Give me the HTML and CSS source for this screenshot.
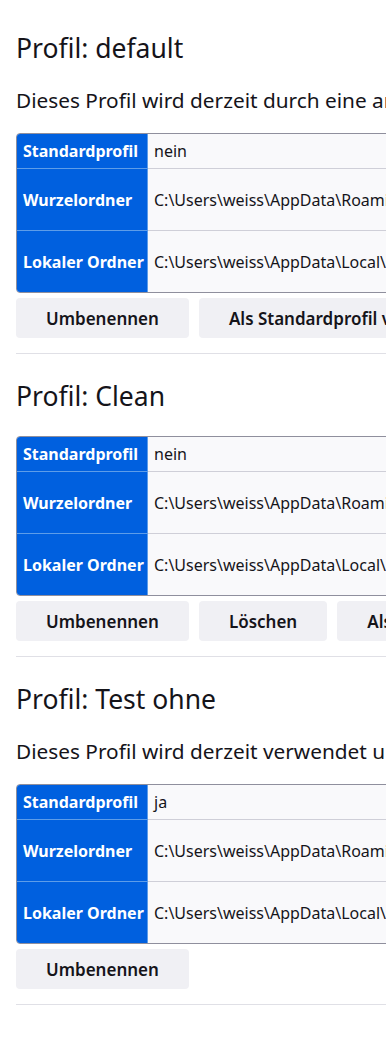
FILE: index.html
```html
<!DOCTYPE html>
<html lang="de">
<head>
<meta charset="utf-8">
<title>Über Profile</title>
<link rel="stylesheet" href="styles.css">
</head>
<body>
<main class="page">
  <section class="profile">
    <h2 class="title">Profil: default</h2>
    <p class="note">Dieses Profil wird derzeit durch eine andere Anwendung verwendet und kann nicht gelöscht werden.</p>
    <div class="info">
      <div class="key">Standardprofil</div><div class="val">nein</div>
      <div class="key tall">Wurzelordner</div><div class="val tall">C:\Users\weiss\AppData\Roaming\Mozilla\Firefox\Profiles\k3x9d2aa.default</div>
      <div class="key tall">Lokaler Ordner</div><div class="val tall">C:\Users\weiss\AppData\Local\Mozilla\Firefox\Profiles\k3x9d2aa.default</div>
    </div>
    <div class="actions">
      <button class="btn">Umbenennen</button>
      <button class="btn">Als Standardprofil verwenden</button>
      <button class="btn">Profil starten</button>
    </div>
  </section>
  <hr class="sep">
  <section class="profile">
    <h2 class="title">Profil: Clean</h2>
    <div class="info">
      <div class="key">Standardprofil</div><div class="val">nein</div>
      <div class="key tall">Wurzelordner</div><div class="val tall">C:\Users\weiss\AppData\Roaming\Mozilla\Firefox\Profiles\p7w1m4qc.Clean</div>
      <div class="key tall">Lokaler Ordner</div><div class="val tall">C:\Users\weiss\AppData\Local\Mozilla\Firefox\Profiles\p7w1m4qc.Clean</div>
    </div>
    <div class="actions">
      <button class="btn">Umbenennen</button>
      <button class="btn">Löschen</button>
      <button class="btn">Als Standardprofil verwenden</button>
      <button class="btn">Profil starten</button>
    </div>
  </section>
  <hr class="sep">
  <section class="profile">
    <h2 class="title">Profil: Test ohne</h2>
    <p class="note">Dieses Profil wird derzeit verwendet und kann daher nicht gelöscht werden.</p>
    <div class="info">
      <div class="key">Standardprofil</div><div class="val">ja</div>
      <div class="key tall">Wurzelordner</div><div class="val tall">C:\Users\weiss\AppData\Roaming\Mozilla\Firefox\Profiles\t2h8v5ne.Test ohne</div>
      <div class="key tall">Lokaler Ordner</div><div class="val tall">C:\Users\weiss\AppData\Local\Mozilla\Firefox\Profiles\t2h8v5ne.Test ohne</div>
    </div>
    <div class="actions">
      <button class="btn">Umbenennen</button>
    </div>
  </section>
  <hr class="sep">
</main>
</body>
</html>
```
FILE: styles.css
```css
html, body {
  margin: 0;
  padding: 0;
  background: #ffffff;
  overflow: hidden;
}

.page {
  width: 900px;
  padding: 6px 0 0 16px;
  font-family: "Noto Sans", "Open Sans", sans-serif;
  color: #15141a;
}

.profile {
  padding-top: 26px;
}

.title {
  margin: 0 0 24px 0;
  font-size: 26.5px;
  line-height: 32px;
  font-weight: 400;
  white-space: nowrap;
}

.note {
  margin: 6px 0 21px 0;
  font-size: 20.8px;
  line-height: 24px;
  white-space: nowrap;
}

.info {
  display: grid;
  grid-template-columns: 131px 1fr;
  width: 860px;
  border: 1px solid #8f8f9d;
  border-radius: 4px 0 0 4px;
  overflow: hidden;
  background: #f9f9fb;
}

.key {
  background: #0060df;
  color: #ffffff;
  font-weight: 700;
  font-size: 16px;
  height: 34px;
  display: flex;
  align-items: center;
  padding-left: 6px;
  border-right: 1px solid #5d9de9;
  white-space: nowrap;
}

.val {
  height: 34px;
  display: flex;
  align-items: center;
  padding-left: 6px;
  font-size: 16px;
  white-space: nowrap;
}

.tall {
  height: 61px;
  border-top: 1px solid #cfcfd8;
}

.key.tall {
  border-top-color: #5d9de9;
}

.actions {
  display: flex;
  gap: 10px;
  margin-top: 5px;
}

.btn {
  height: 40px;
  padding: 0 30px;
  border: none;
  border-radius: 4px;
  background: #f0f0f4;
  color: #15141a;
  font-family: "Noto Sans", "Open Sans", sans-serif;
  font-size: 17px;
  font-weight: 600;
  white-space: nowrap;
}

.sep {
  margin: 15px 0 0 0;
  border: none;
  border-top: 1px solid #e0e0e6;
  width: 900px;
}
```
